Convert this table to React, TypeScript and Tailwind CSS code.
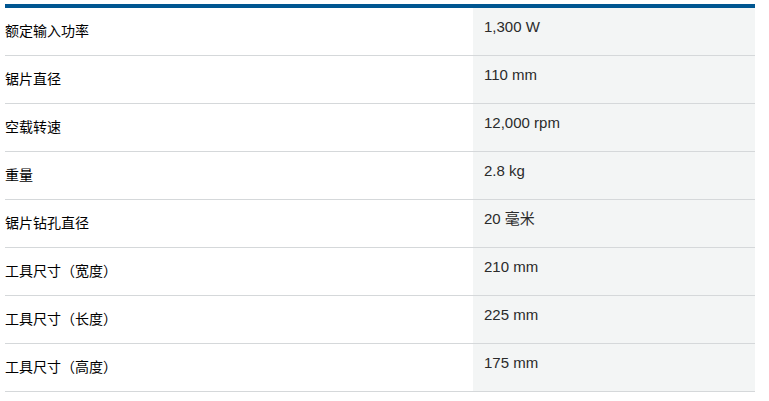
const specs = [
  { label: '额定输入功率', value: '1,300 W' },
  { label: '锯片直径', value: '110 mm' },
  { label: '空载转速', value: '12,000 rpm' },
  { label: '重量', value: '2.8 kg' },
  { label: '锯片钻孔直径', value: '20 毫米' },
  { label: '工具尺寸（宽度）', value: '210 mm' },
  { label: '工具尺寸（长度）', value: '225 mm' },
  { label: '工具尺寸（高度）', value: '175 mm' },
]

export default function App() {
  return (
    <div
      className="min-h-[401px] bg-white pt-[4px] pl-[5px]"
      style={{ fontFamily: '"Liberation Sans", "Noto Sans CJK SC", sans-serif' }}
    >
      <div className="w-[750px] border-t-4 border-[#005691]">
        {specs.map((row) => (
          <div key={row.label} className="grid grid-cols-[468px_282px] h-[48px] border-b border-[#d5d8da]">
            <div className="flex items-center text-[14px] text-black">{row.label}</div>
            <div className="bg-[#f3f5f5] pl-[11px] pt-[8px] text-[15px] leading-[22px] text-[#2b2b2b]">{row.value}</div>
          </div>
        ))}
      </div>
    </div>
  )
}
